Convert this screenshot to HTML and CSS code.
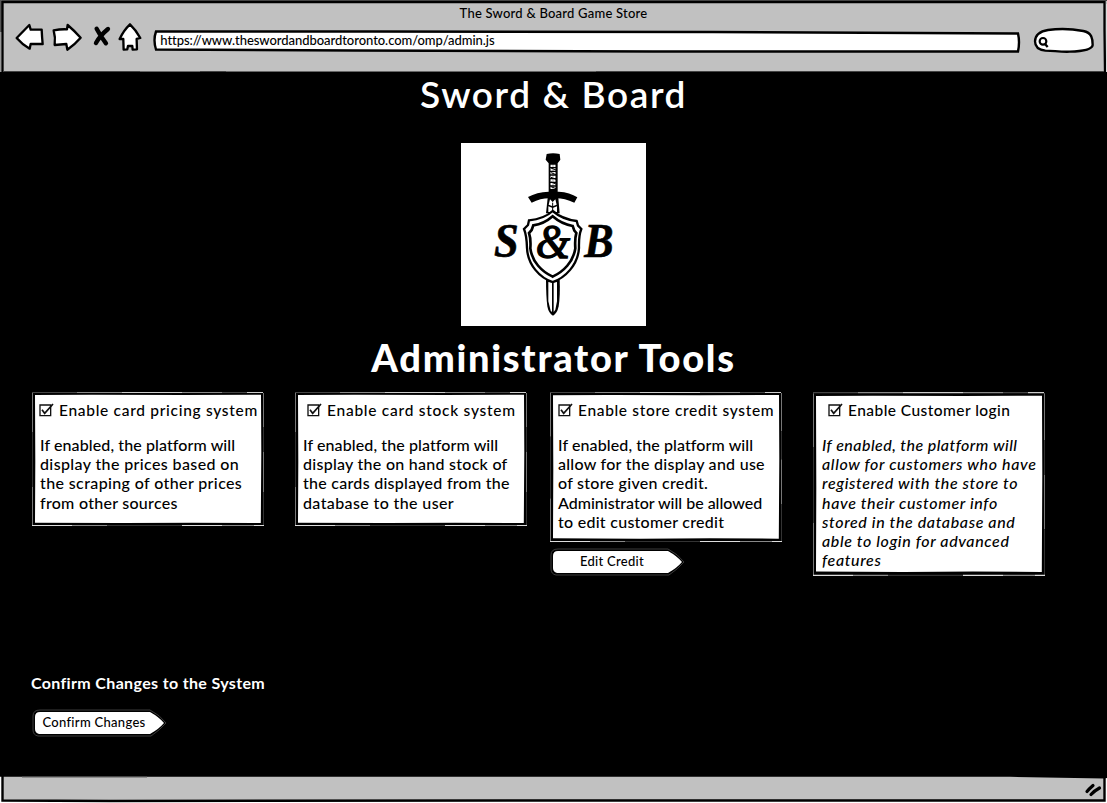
FILE: index.html
```
<!DOCTYPE html>
<html lang="en">
<head>
<meta charset="utf-8">
<title>The Sword &amp; Board Game Store</title>
<link rel="stylesheet" href="styles.css">
</head>
<body>
<svg class="defs" width="0" height="0">
  <symbol id="edge" viewBox="0 0 232 134" preserveAspectRatio="none">
    <path d="M3 3 60 2.700 150 3 229 2.700 229.300 60 228.800 131 160 130.700 90 131 3 130.700 3.300 70Z" fill="#fff"/>
    <path d="M.5 134V95M.5 40V1" stroke="#777"/><path d="M.5 95V40" stroke="#333"/>
    <path d="M0 .5H45M190 .5H215" stroke="#444"/><path d="M45 .5H90M150 .5H190" stroke="#888"/><path d="M90 .5H150M215 .5H231" stroke="#ccc"/>
    <path d="M231.500 1V35M231.500 60V100" stroke="#777"/><path d="M231.500 35V60M231.500 100V134" stroke="#333"/>
    <path d="M0 133.500H40M150 133.500H190M222 133.500H232" stroke="#ddd"/><path d="M40 133.500H75M190 133.500H222" stroke="#888"/><path d="M75 133.500H150" stroke="#333"/>
  </symbol>
  <symbol id="box" viewBox="0 0 45 42"><path d="M3 6H35V38H3Z" stroke-width="4"/><path d="M9 20 17 31 42 3" stroke-width="5"/></symbol>
  <symbol id="tag" viewBox="0 0 135 28"><path d="M8 1H118Q128 6 134 14Q128 21 119 27H6Q1 26 1 21V7Q1 1 8 1Z" fill="none" stroke="#555" stroke-width=".7"/><path d="M8 3H118Q127 8 132 14Q127 20 118 25H7Q3 24 3 20V8Q3 3 8 3Z" fill="#fff"/></symbol>
</svg>
<div class="window">
  <header class="chrome">
    <svg class="frame" viewBox="0 0 1107 72">
      <path d="M0 .5H1107" stroke="#444"/>
      <path d="M1 0V32" stroke="#555" stroke-width="2"/><path d="M.5 32V72" stroke="#999"/>
      <path d="M2.500 72V2.200H1104.500V30L1105 72" stroke="#000" stroke-width="2.300" fill="none"/>
      <path d="M1106.500 4V72" stroke="#ddd"/>
      <path d="M3 71.500H1104" stroke="#444"/>
      <path d="M140 71.500H200M226 71.500H596" stroke="#666"/>
    </svg>
    <div class="window-title">The Sword &amp; Board Game Store</div>
    <div class="toolbar">
      <svg class="nav" viewBox="45 65 385 90" fill="#fff" stroke="#000" stroke-width="7" stroke-linejoin="round" stroke-linecap="round">
        <path d="M50 113 88 74 92 88 125 88Q126 110 128 131L92 131 89 145Q66 132 50 113Z"/>
        <path d="M161 90Q182 86 201 87L203 74Q224 92 242 112Q224 133 202 148L199 131 164 134Q167 111 161 90Z"/>
        <path d="M290 85Q302 108 318 129M324 86Q300 106 288 128" stroke-width="13"/>
        <path d="M390 72Q408 89 421 113L410 116 411 147 398 148 397 137 384 137 382 147 371 148 370 116 359 116Q371 90 390 72Z"/>
      </svg>
      <div class="address">
        <svg class="fill" viewBox="0 0 868 24" preserveAspectRatio="none"><path d="M3 1.500 220 1.500 560 2 865 3.500Q867 12 865 21.500L500 21.500 200 20.500 3 19.500Q0 10 3 1.500Z" fill="#fff" stroke="#000" stroke-width="2.400"/></svg>
        <span class="url">https://www.theswordandboardtoronto.com/omp/admin.js</span>
      </div>
      <svg class="search" viewBox="880 82 186 80" fill="#fff" stroke="#000">
        <path d="M886 125C887 106 899 95 925 91C960 86 1000 88 1031 94C1057 99 1059 118 1059 136C1057 152 1022 155 990 156C960 157 941 153 917 153C898 151 886 143 886 125Z" stroke-width="7"/>
        <circle cx="910" cy="125" r="10" stroke-width="6.500"/><path d="M916 133 924 142" stroke-width="7"/>
      </svg>
    </div>
  </header>

  <main class="page">
    <h1 class="store">Sword &amp; Board</h1>
    <svg class="logo" viewBox="18 15 555 549">
      <rect x="18" y="15" width="555" height="549" fill="#fff"/>
      <path d="M275 48Q294 44 314 48L316 65 308 76 308 165H281V76L272 65Z"/>
      <path d="M290 80V156M298 80V156" stroke="#fff" stroke-width="7" fill="none" stroke-dasharray="7 4"/>
      <path d="M288 90 303 96M288 104 303 110M288 118 303 124M288 132 303 138M288 146 303 152" stroke="#000" stroke-width="3"/>
      <path d="M219 177Q245 162 281 161H311Q345 163 367 178L358 194Q328 181 304 181L293 188 282 181Q257 181 230 194Z"/>
      <path d="M278 180H310L314 226H273Z"/>
      <path d="M285 184 293 192 301 184 305 200 293 205 281 200ZM280 205 293 210 306 205V222H280Z" fill="#fff"/>
      <path d="M293 194V216" stroke="#000" stroke-width="3"/>
      <path d="M273 423H314Q316 474 311 505Q306 528 294 533Q281 527 277 505Q273 474 273 423Z"/>
      <path d="M280 432V490L287 518 291 522V434ZM296 434V522L301 515 306 490V432Z" fill="#fff"/>
      <path d="M293 219Q322 244 365 249L369 263 379 273Q371 292 372 330C369 381 330 420 293 432C255 420 218 381 216 330Q215 292 207 273L219 261 222 247Q267 243 293 219Z" fill="#fff" stroke="#000" stroke-width="7"/>
      <path d="M293 235Q319 258 353 264L358 278 364 285Q359 302 361 331C355 372 325 401 293 416C261 401 231 372 226 331Q228 302 222 285L230 276 235 262Q267 258 293 235Z" fill="none" stroke="#000" stroke-width="8"/>
      <g class="letters"><text x="117" y="356" font-size="146" textLength="74" lengthAdjust="spacingAndGlyphs">S</text>
      <text class="amp" x="242" y="361" font-size="144" textLength="103" lengthAdjust="spacingAndGlyphs">&amp;</text>
      <text x="388" y="356" font-size="146" textLength="88" lengthAdjust="spacingAndGlyphs">B</text></g>
    </svg>
    <h2 class="tools">Administrator Tools</h2>

    <section class="cards">
      <div class="column">
        <article class="card">
          <svg class="fill"><use href="#edge"/></svg>
          <label class="option"><svg class="check"><use href="#box"/></svg><span>Enable card pricing system</span></label>
          <p class="text"><span class="tight">If enabled, the platform will</span><span class="loose">display the prices based on</span><span class="loose">the scraping of other prices</span><span>from other sources</span></p>
        </article>
      </div>
      <div class="column">
        <article class="card">
          <svg class="fill"><use href="#edge"/></svg>
          <label class="option indent5"><svg class="check"><use href="#box"/></svg><span>Enable card stock system</span></label>
          <p class="text"><span class="tight">If enabled, the platform will</span><span>display the on hand stock of</span><span>the cards displayed from the</span><span class="loose">database to the user</span></p>
        </article>
      </div>
      <div class="column">
        <article class="card mid">
          <svg class="fill"><use href="#edge"/></svg>
          <label class="option indent1"><svg class="check"><use href="#box"/></svg><span>Enable store credit system</span></label>
          <p class="text"><span class="tight">If enabled, the platform will</span><span>allow for the display and use</span><span>of store given credit.</span><span class="tighter">Administrator will be allowed</span><span>to edit customer credit</span></p>
        </article>
        <button class="arrow"><svg class="fill"><use href="#tag"/></svg><span>Edit Credit</span></button>
      </div>
      <div class="column">
        <article class="card tall">
          <svg class="fill"><use href="#edge"/></svg>
          <label class="option indent8"><svg class="check"><use href="#box"/></svg><span>Enable Customer login</span></label>
          <p class="text slanted"><span class="near">If enabled, the platform will</span><span>allow for customers who have</span><span>registered with the store to</span><span>have their customer info</span><span>stored in the database and</span><span>able to login for advanced</span><span>features</span></p>
        </article>
      </div>
    </section>

    <section class="confirm">
      <h3 class="confirm-title">Confirm Changes to the System</h3>
      <button class="arrow"><svg class="fill"><use href="#tag"/></svg><span>Confirm Changes</span></button>
    </section>
  </main>

  <footer class="status">
    <svg class="fill" viewBox="0 0 1107 27">
      <rect width="1107" height="27" fill="#fff"/>
      <path d="M2.500 0H1104.500V24.500H2.500Z" fill="#c1c1c1"/>
      <path d="M0 0H1107V2L1104 2.500 1010 .8H0Z" fill="#000"/>
      <path d="M2.500 0V24.500L110 25 520 24.500 1104.500 24.500V0" fill="none" stroke="#000" stroke-width="2.400"/>
      <path d="M22 1.200H147" stroke="#777"/>
      <path d="M1087 15.500Q1089 13 1093 9.500M1091 18.500Q1094 15 1099.500 12" fill="none" stroke="#000" stroke-width="3.200" stroke-linecap="round"/>
    </svg>
  </footer>
</div>
</body>
</html>
```
FILE: styles.css
```
* { box-sizing: border-box; }
body { margin: 0; background: #000; font-family: Lato, "Open Sans", sans-serif; font-weight: 500; color: #000; }
h1, h2, h3, p { margin: 0; }
svg { display: block; }
.defs { position: absolute; }
.window { width: 1107px; height: 803px; display: flex; flex-direction: column; overflow: hidden; }
.chrome { position: relative; height: 72px; background: #c1c1c1; }
.frame, .fill { position: absolute; inset: 0; width: 100%; height: 100%; fill: none; }
.window-title { padding-top: 5px; text-align: center; font-size: 13px; line-height: 17px; letter-spacing: .22px; }
.toolbar { display: flex; align-items: flex-start; padding-left: 15px; position: relative; }
.nav { width: 128.300px; height: 30px; flex: none; }
.address { position: relative; width: 868px; height: 24px; margin: 8px 0 0 10px; padding: 2px 0 0 7px; flex: none; }
.url { position: relative; display: block; font-size: 13px; line-height: 17px; letter-spacing: -.05px; white-space: nowrap; }
.search { width: 62px; height: 26.700px; margin: 5px 0 0 12px; flex: none; }

.page { flex: 1; display: flex; flex-direction: column; }
.store { color: #fff; text-align: center; font-size: 37px; line-height: 44px; font-weight: 600; letter-spacing: 1.600px; }
.logo { width: 185px; height: 183px; margin: 27px 0 0 461px; fill: #000; }
.letters { font-family: "Liberation Serif", serif; font-weight: 700; font-style: italic; stroke: #000; stroke-width: 2; }
.amp { font-weight: 400; stroke-width: 4; }
.tools { color: #fff; text-align: center; margin-top: 8px; font-size: 38px; line-height: 46px; font-weight: 900; letter-spacing: 1.700px; }
.cards { display: grid; grid-template-columns: 263px 255px 263px 232px; padding-left: 32px; margin-top: 12px; height: 184px; }
.column { display: flex; flex-direction: column; align-items: flex-start; }
.card { position: relative; width: 232px; height: 134px; padding: 6px 0 0 5px; }
.mid { height: 150px; }
.tall { height: 184px; }
.option { position: relative; display: flex; align-items: center; height: 24px; padding-left: 2px; font-size: 15.500px; white-space: nowrap; letter-spacing: .7px; gap: 5px; }
.indent1 { padding-left: 3px; letter-spacing: .66px; }
.indent5 { padding-left: 7px; letter-spacing: .74px; }
.indent8 { padding-left: 10px; letter-spacing: .45px; }
.check { width: 15px; height: 14px; fill: none; stroke: #111; }
.text { position: relative; padding: 13px 0 0 3px; font-size: 16px; line-height: 19.200px; letter-spacing: .27px; white-space: nowrap; }
.text span { display: block; }
.text .tight { letter-spacing: .1px; }
.text .tighter { letter-spacing: -.01px; }
.text .loose { letter-spacing: .38px; }
.slanted { padding-left: 4px; font-style: italic; letter-spacing: .63px; }
.slanted .near { letter-spacing: .46px; }
.arrow { position: relative; width: 135px; height: 28px; margin: 6px 0 0; padding: 0 11px 2px 0; background: none; border: 0; font: 500 13px Lato, sans-serif; letter-spacing: .3px; color: #000; text-align: center; }
.arrow span { position: relative; }
.confirm { padding: 96px 0 0 31px; }
.confirm-title { color: #fff; font-size: 16px; line-height: 22px; font-weight: 700; letter-spacing: .35px; }
.confirm .arrow { margin: 15px 0 0 1px; }
.status { position: relative; height: 27px; }
```
